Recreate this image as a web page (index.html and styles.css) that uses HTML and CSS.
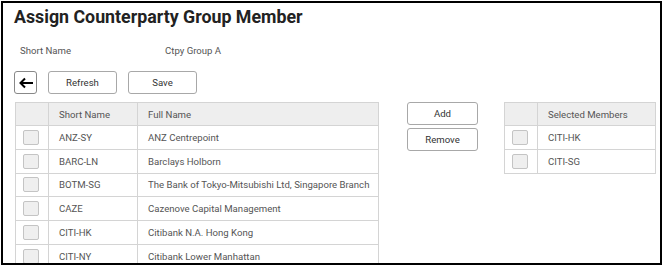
FILE: index.html
```html
<!DOCTYPE html>
<html lang="en">
<head>
  <meta charset="UTF-8">
  <title>Assign Counterparty Group Member</title>
  <link rel="stylesheet" href="styles.css">
</head>
<body>
  <div class="frame">
    <h1 class="page-title">Assign Counterparty Group Member</h1>

    <div class="info-row">
      <span class="info-label">Short Name</span>
      <span class="info-value">Ctpy Group A</span>
    </div>

    <div class="toolbar">
      <button class="btn back-btn" title="Back">
        <svg width="16" height="12" viewBox="0 0 16 12">
          <path d="M15 6H2.5M7 1.5L2.5 6L7 10.5" fill="none" stroke="#000" stroke-width="2"/>
        </svg>
      </button>
      <button class="btn">Refresh</button>
      <button class="btn">Save</button>
    </div>

    <div class="main">
      <table class="grid grid-all">
        <thead>
          <tr>
            <th class="col-check"></th>
            <th class="col-short">Short Name</th>
            <th>Full Name</th>
          </tr>
        </thead>
        <tbody>
          <tr><td class="col-check"><span class="check"></span></td><td>ANZ-SY</td><td>ANZ Centrepoint</td></tr>
          <tr><td class="col-check"><span class="check"></span></td><td>BARC-LN</td><td>Barclays Holborn</td></tr>
          <tr><td class="col-check"><span class="check"></span></td><td>BOTM-SG</td><td>The Bank of Tokyo-Mitsubishi Ltd, Singapore Branch</td></tr>
          <tr><td class="col-check"><span class="check"></span></td><td>CAZE</td><td>Cazenove Capital Management</td></tr>
          <tr><td class="col-check"><span class="check"></span></td><td>CITI-HK</td><td>Citibank N.A. Hong Kong</td></tr>
          <tr><td class="col-check"><span class="check"></span></td><td>CITI-NY</td><td>Citibank Lower Manhattan</td></tr>
        </tbody>
      </table>

      <div class="actions">
        <button class="btn action-btn">Add</button>
        <button class="btn action-btn">Remove</button>
      </div>

      <table class="grid grid-selected">
        <thead>
          <tr>
            <th class="col-check"></th>
            <th>Selected Members</th>
          </tr>
        </thead>
        <tbody>
          <tr><td class="col-check"><span class="check"></span></td><td>CITI-HK</td></tr>
          <tr><td class="col-check"><span class="check"></span></td><td>CITI-SG</td></tr>
        </tbody>
      </table>
    </div>
  </div>
</body>
</html>
```

FILE: styles.css
```css
body {
  margin: 0;
  padding: 0;
  background: #fff;
  font-family: Roboto, 'Liberation Sans', sans-serif;
  color: #444;
}

.frame {
  box-sizing: border-box;
  width: 661px;
  height: 264px;
  margin: 1px 0 0 1px;
  border: 2px solid #000;
  padding: 0 0 0 11px;
  overflow: hidden;
}

.page-title {
  margin: 3px 0 0 0;
  font-size: 17.8px;
  line-height: 22px;
  font-weight: 700;
  color: #222;
}

.info-row {
  display: flex;
  margin-top: 16px;
  padding-left: 6px;
  font-size: 9.6px;
  line-height: 14px;
  color: #555;
}

.info-label {
  width: 145px;
}

.toolbar {
  display: flex;
  gap: 11px;
  margin-top: 13px;
}

.btn {
  box-sizing: border-box;
  height: 23px;
  width: 69px;
  padding: 0;
  background: #fff;
  border: 1px solid #a8a8a8;
  border-radius: 3px;
  font-family: Roboto, 'Liberation Sans', sans-serif;
  font-size: 9.6px;
  color: #333;
  cursor: pointer;
}

.back-btn {
  width: 23px;
  border-color: #888;
  display: flex;
  align-items: center;
  justify-content: center;
}

.main {
  display: flex;
  align-items: flex-start;
  margin-top: 8px;
  padding-left: 1px;
}

.grid {
  border-collapse: collapse;
  font-size: 9.6px;
  color: #555;
}

.grid th,
.grid td {
  border: 1px solid #d4d4d4;
  text-align: left;
  padding: 0 0 0 10px;
  font-weight: 400;
}

.grid th {
  height: 22px;
  background: #eeeeee;
}

.grid td {
  height: 22.8px;
}

.grid .col-check {
  width: 25px;
  padding: 0 0 0 7px;
}

.check {
  display: block;
  box-sizing: border-box;
  width: 16px;
  height: 15px;
  background: #efefef;
  border: 1px solid #c4c4c4;
  border-radius: 2px;
}

.grid-all {
  width: 364px;
}

.grid-all .col-short {
  width: 78px;
}

.actions {
  display: flex;
  flex-direction: column;
  gap: 3px;
  margin-left: 28px;
}

.action-btn {
  width: 71px;
}

.grid-selected {
  width: 152px;
  margin-left: 26px;
}
```
